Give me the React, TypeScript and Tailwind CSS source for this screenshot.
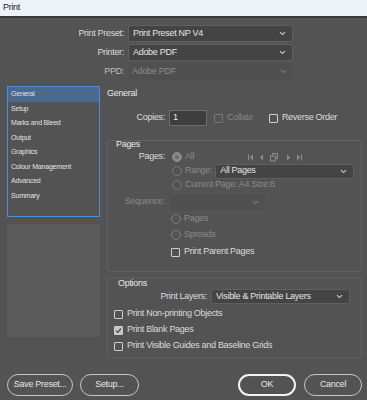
import React from 'react';

const FONT = '"Liberation Sans", Arial, sans-serif';

const Chevron = ({ color = '#d8d8d8' }: { color?: string }) => (
  <svg width="7" height="5" viewBox="0 0 7 5" className="shrink-0">
    <path d="M1 1.2 L3.5 3.6 L6 1.2" fill="none" stroke={color} strokeWidth="1.1" />
  </svg>
);

const Select = ({ value, className, disabled }: { value: string; className: string; disabled?: boolean }) => (
  <div
    className={`flex items-center justify-between rounded-[2px] pl-[4px] pr-[6px] ${
      disabled ? 'bg-[#505050] text-[#8c8c8c]' : 'bg-[#444444] border border-[#5f5f5f] text-[#e4e4e4]'
    } ${className}`}
  >
    <span>{value}</span>
    <Chevron color={disabled ? '#7d7d7d' : '#d0d0d0'} />
  </div>
);

const Checkbox = ({ checked, disabled }: { checked?: boolean; disabled?: boolean }) => (
  <div
    className={`w-[9px] h-[9px] shrink-0 rounded-[1px] border flex items-center justify-center ${
      disabled ? 'border-[#777777]' : checked ? 'border-[#cfcfcf] bg-[#c4c4c4]' : 'border-[#cfcfcf]'
    }`}
  >
    {checked && (
      <svg width="7" height="7" viewBox="0 0 7 7">
        <path d="M1 3.6 L2.8 5.3 L6 1.5" fill="none" stroke="#505050" strokeWidth="1.3" />
      </svg>
    )}
  </div>
);

const Radio = ({ selected }: { selected?: boolean }) => (
  <div
    className={`w-[10px] h-[10px] shrink-0 rounded-full border flex items-center justify-center ${
      selected ? 'border-[#8a8a8a] bg-[#8a8a8a]' : 'border-[#7a7a7a]'
    }`}
  >
    {selected && <div className="w-[4px] h-[4px] rounded-full bg-[#6a6a6a]" />}
  </div>
);

const NavIcons = () => (
  <svg width="54" height="9" viewBox="0 0 54 9">
    <g fill="#8c8c8c">
      <rect x="0" y="1.5" width="1" height="6" />
      <path d="M5 1.5 L2 4.5 L5 7.5 Z" />
      <path d="M15 1.5 L12 4.5 L15 7.5 Z" />
      <path d="M39 1.5 L42 4.5 L39 7.5 Z" />
      <path d="M49 1.5 L52 4.5 L49 7.5 Z" />
      <rect x="53" y="1.5" width="1" height="6" />
    </g>
    <g fill="none" stroke="#8c8c8c" strokeWidth="1">
      <rect x="24.5" y="0.5" width="5" height="5" />
      <rect x="22.5" y="3" width="5" height="5" fill="#535353" />
    </g>
  </svg>
);

const Button = ({ label, w, primary }: { label: string; w: string; primary?: boolean }) => (
  <div
    className={`h-[22px] ${w} rounded-full flex items-center justify-center text-[#e6e6e6] ${
      primary ? 'border-2 border-[#f2f2f2]' : 'border-[1.5px] border-[#c4c4c4]'
    }`}
  >
    {label}
  </div>
);

const navItems = ['General', 'Setup', 'Marks and Bleed', 'Output', 'Graphics', 'Colour Management', 'Advanced', 'Summary'];

export default function App() {
  return (
    <div
      className="w-[367px] h-[400px] bg-[#535353] flex flex-col text-[9px] tracking-[-0.3px] overflow-hidden"
      style={{ fontFamily: FONT }}
    >
      {/* title bar */}
      <div className="h-[18px] bg-[#eef3fa] border-b-2 border-[#3a3a3a] flex items-center pl-[3px] text-[#1a1a1a]">Print</div>

      {/* top fields */}
      <div className="pt-[7px] flex flex-col gap-[2px] text-[#dcdcdc]">
        <div className="flex items-center h-[17px]">
          <div className="w-[124px] text-right">Print Preset:</div>
          <Select value="Print Preset NP V4" className="ml-[4px] w-[165px] h-[17px]" />
        </div>
        <div className="flex items-center h-[17px]">
          <div className="w-[124px] text-right">Printer:</div>
          <Select value="Adobe PDF" className="ml-[4px] w-[165px] h-[17px]" />
        </div>
        <div className="flex items-center h-[17px]">
          <div className="w-[124px] text-right text-[#bdbdbd]">PPD:</div>
          <Select value="Adobe PDF" className="ml-[4px] w-[165px] h-[17px]" disabled />
        </div>
      </div>

      {/* main */}
      <div className="flex mt-[6px] pl-[7px]">
        <div className="w-[93px] flex flex-col">
          <div className="h-[131px] border border-[#4f8fd4] text-[7px] tracking-[-0.2px] text-[#e2e2e2]">
            {navItems.map((item, i) => (
              <div key={item} className={`h-[14.5px] flex items-center pl-[3px] ${i === 0 ? 'bg-[#4a698c]' : ''}`}>
                {item}
              </div>
            ))}
          </div>
          <div className="mt-[7px] h-[113px] bg-[#5b5b5b]" />
        </div>

        <div className="ml-[7px] w-[255px] flex flex-col text-[#dcdcdc]">
          <div className="h-[16px] flex items-center text-[#e8e8e8]">General</div>

          <div className="mt-[8px] h-[16px] flex items-center">
            <div className="w-[58px] text-right">Copies:</div>
            <div className="ml-[4px] w-[38px] h-[16px] bg-[#3e3e3e] border border-[#6c6c6c] pl-[3px] flex items-center text-[#e6e6e6]">1</div>
            <div className="ml-[7px]"><Checkbox disabled /></div>
            <span className="ml-[4px] text-[#858585]">Collate</span>
            <div className="ml-[16px]"><Checkbox /></div>
            <span className="ml-[4px]">Reverse Order</span>
          </div>

          {/* Pages group */}
          <div className="mt-[14px] h-[132px] border border-[#616161] rounded-[2px] flex flex-col">
            <div className="h-[7px] leading-[7px] pl-[8px] text-[#e8e8e8]">Pages</div>
            <div className="mt-[2px] h-[14px] flex items-center">
              <div className="w-[57px] text-right">Pages:</div>
              <div className="ml-[7px]"><Radio selected /></div>
              <span className="ml-[3px] text-[#8a8a8a]">All</span>
              <div className="ml-[54px]"><NavIcons /></div>
            </div>
            <div className="h-[14px] flex items-center pl-[64px]">
              <Radio />
              <span className="ml-[3px] text-[#8a8a8a]">Range:</span>
              <Select value="All Pages" className="ml-[3px] w-[139px] h-[15px]" />
            </div>
            <div className="h-[14px] flex items-center pl-[64px]">
              <Radio />
              <span className="ml-[3px] text-[#8a8a8a]">Current Page: A4 Size:8</span>
            </div>
            <div className="h-[20px] flex items-center">
              <div className="w-[57px] text-right text-[#8a8a8a]">Sequence:</div>
              <Select value="" className="ml-[5px] w-[95px] h-[15px]" disabled />
            </div>
            <div className="h-[14px] flex items-center pl-[63px]">
              <Radio />
              <span className="ml-[3px] text-[#8a8a8a]">Pages</span>
            </div>
            <div className="mt-[2px] h-[14px] flex items-center pl-[63px]">
              <Radio />
              <span className="ml-[3px] text-[#8a8a8a]">Spreads</span>
            </div>
            <div className="mt-[3px] h-[14px] flex items-center pl-[63px]">
              <Checkbox />
              <span className="ml-[4px]">Print Parent Pages</span>
            </div>
          </div>

          {/* Options group */}
          <div className="mt-[5px] h-[81px] border border-[#616161] rounded-[2px] flex flex-col">
            <div className="h-[10px] leading-[10px] pl-[10px] text-[#e8e8e8]">Options</div>
            <div className="mt-[1px] h-[15px] flex items-center">
              <div className="w-[99px] text-right">Print Layers:</div>
              <Select value="Visible & Printable Layers" className="ml-[4px] w-[139px] h-[15px]" />
            </div>
            <div className="mt-[2px] h-[16px] flex items-center pl-[6px]">
              <Checkbox />
              <span className="ml-[4px]">Print Non-printing Objects</span>
            </div>
            <div className="h-[16px] flex items-center pl-[6px]">
              <Checkbox checked />
              <span className="ml-[4px]">Print Blank Pages</span>
            </div>
            <div className="h-[16px] flex items-center pl-[6px]">
              <Checkbox />
              <span className="ml-[4px]">Print Visible Guides and Baseline Grids</span>
            </div>
          </div>
        </div>
      </div>

      {/* footer buttons */}
      <div className="mt-auto mb-[4px] flex items-center px-[7px]">
        <Button label="Save Preset..." w="w-[66px]" />
        <div className="ml-[7px]"><Button label="Setup..." w="w-[59px]" /></div>
        <div className="ml-auto"><Button label="OK" w="w-[58px]" primary /></div>
        <div className="ml-[8px] mr-[-2px]"><Button label="Cancel" w="w-[58px]" /></div>
      </div>
    </div>
  );
}
